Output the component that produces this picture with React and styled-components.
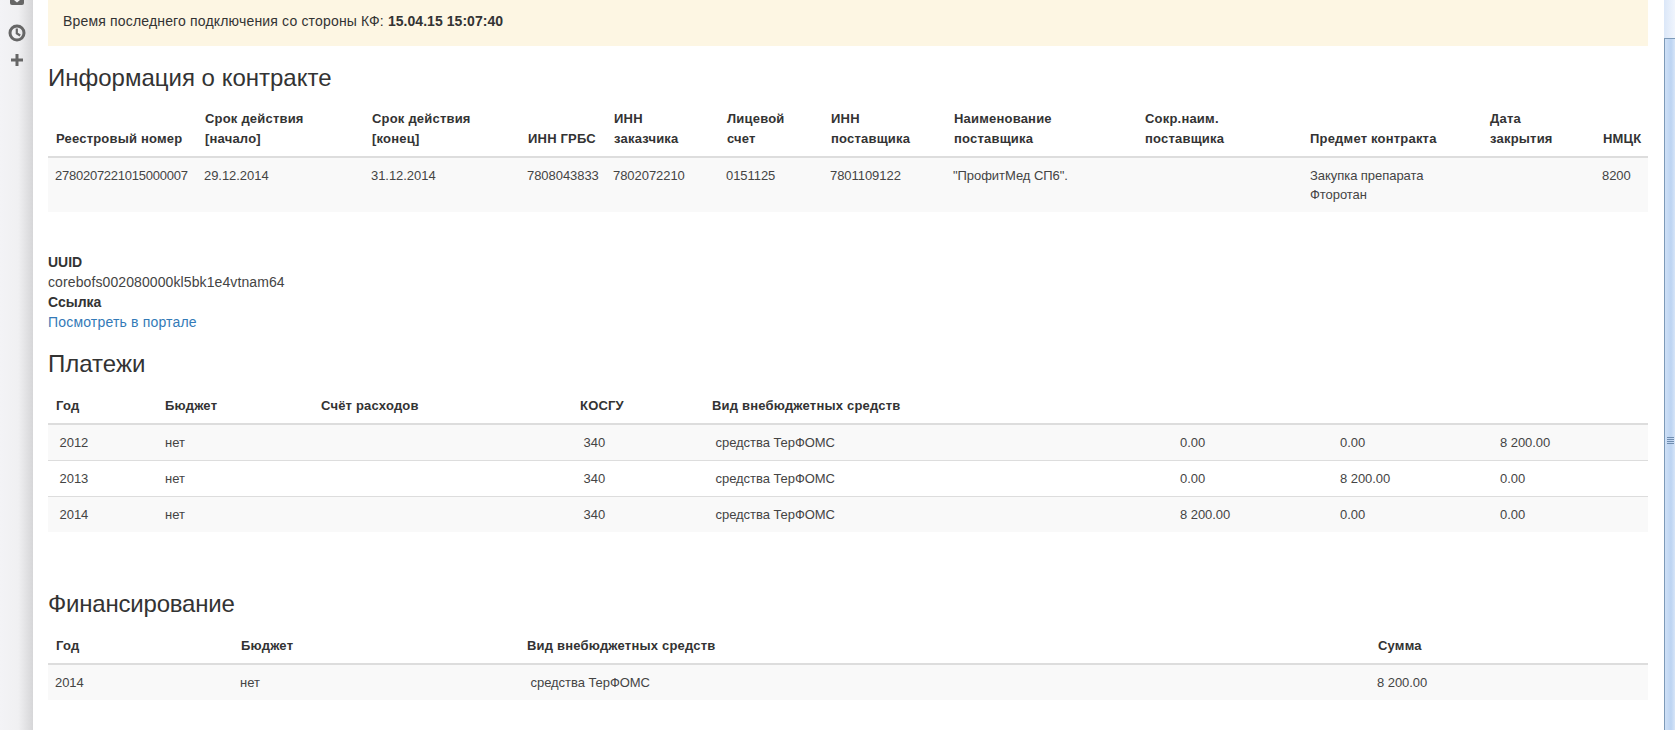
import styled, { createGlobalStyle } from 'styled-components';

const GlobalStyle = createGlobalStyle`
    html, body {
        margin: 0;
        padding: 0;
        height: 100%;
        overflow: hidden;
        background: #fff;
    }
    body {
        font-family: "Liberation Sans", Arial, sans-serif;
        font-size: 14px;
        line-height: 20px;
        color: #333;
    }
`

const Layout = styled.div`
    display: flex;
    width: 1675px;
    height: 730px;
    overflow: hidden;
`

const Sidebar = styled.div`
    width: 33px;
    flex: none;
    display: flex;
    flex-direction: column;
    align-items: center;
    background: linear-gradient(90deg, #f3f3f6 0%, #f0f0f2 55%, #d6d6d8 100%);
    color: #666;
`

const TopIcon = styled.svg`
    display: block;
`

const ClockIcon = styled.svg`
    display: block;
    margin-top: 19px;
`

const PlusIcon = styled.svg`
    display: block;
    margin-top: 12px;
`

const Content = styled.div`
    flex: 1;
    min-width: 0;
    padding: 0 16px 0 15px;
`

const Alert = styled.div`
    background: #fdf6e3;
    padding: 11px 15px 15px;
    letter-spacing: 0.17px;

    b {
        letter-spacing: 0.05px;
    }
`

const Heading = styled.h3`
    font-size: 24px;
    font-weight: normal;
    line-height: 26px;
    margin: ${(p) => p.$top}px 0 ${(p) => p.$bottom}px;
    letter-spacing: ${(p) => p.$spacing || 0}px;
    color: #333;
`

const Table = styled.table`
    width: 1600px;
    border-collapse: collapse;
    table-layout: fixed;
    font-size: 13px;
    line-height: 19px;
`

const HeadCell = styled.th`
    text-align: left;
    vertical-align: bottom;
    padding: 8px 8px 7px;
    font-weight: bold;
    line-height: 20px;
    letter-spacing: 0.2px;
    border-bottom: 2px solid #ddd;
    white-space: nowrap;
`

const Row = styled.tr`
    background: ${(p) => (p.$odd ? '#f9f9f9' : '#fff')};
    &:not(:first-child) {
        border-top: 1px solid #ddd;
    }
`

const Cell = styled.td`
    vertical-align: top;
    padding: 8px 8px 8px ${(p) => p.$left || 8}px;
    color: #444;
    letter-spacing: ${(p) => (p.$tight ? -0.25 : -0.05)}px;
`

const Details = styled.div`
    margin-top: 40px;
`

const Label = styled.div`
    font-weight: bold;
`

const Value = styled.div`
    letter-spacing: 0.1px;
    color: #444;
`

const PortalLink = styled.a`
    color: #337ab7;
    text-decoration: none;
    letter-spacing: 0.18px;
`

const Scrollbar = styled.div`
    width: 11px;
    flex: none;
    display: flex;
    flex-direction: column;
    background: linear-gradient(90deg, #dbe7f8, #f0f5fd);
`

const ScrollTop = styled.div`
    height: 38px;
    flex: none;
`

const ScrollThumb = styled.div`
    flex: 1;
    display: flex;
    flex-direction: column;
    align-items: center;
    padding-top: 398px;
    gap: 1px;
    border-left: 1px solid #7d9ab8;
    border-top: 1px solid #7d9ab8;
    background: linear-gradient(90deg, #cfe0f6, #bcd4f2 60%, #d6e5f8);
`

const Grip = styled.span`
    width: 7px;
    height: 1px;
    background: #6f8db0;
`

const contractCols = [149, 167, 156, 86, 113, 104, 123, 191, 165, 180, 113, 53];
const paymentCols = [109, 156, 259, 132, 468, 160, 160, 156];
const financeCols = [185, 286, 851, 278];

const Cols = ({ widths }) => (
    <colgroup>
        {widths.map((w, i) => <col key={i} style={{ width: w }} />)}
    </colgroup>
);

const contractHead = [
    ['Реестровый номер'],
    ['Срок действия', '[начало]'],
    ['Срок действия', '[конец]'],
    ['ИНН ГРБС'],
    ['ИНН', 'заказчика'],
    ['Лицевой', 'счет'],
    ['ИНН', 'поставщика'],
    ['Наименование', 'поставщика'],
    ['Сокр.наим.', 'поставщика'],
    ['Предмет контракта'],
    ['Дата', 'закрытия'],
    ['НМЦК'],
];

const contractRow = [
    '29.12.2014', '31.12.2014', '7808043833', '7802072210', '0151125',
    '7801109122', '"ПрофитМед СП6".', '',
];

const payments = [
    ['2012', '0.00', '0.00', '8 200.00'],
    ['2013', '0.00', '8 200.00', '0.00'],
    ['2014', '8 200.00', '0.00', '0.00'],
];

const App = () => {
    return (
        <Layout>
            <GlobalStyle />
            <Sidebar>
                <TopIcon width="14" height="5" viewBox="0 0 14 5">
                    <path d="M0 0h14v3a2 2 0 0 1-2 2H2a2 2 0 0 1-2-2z" fill="currentColor" />
                    <path d="M4 0l3 2.5L10 0z" fill="#f0f0f2" />
                </TopIcon>
                <ClockIcon width="18" height="18" viewBox="0 0 18 18">
                    <circle cx="9" cy="9" r="7" fill="none" stroke="currentColor" strokeWidth="3" />
                    <path d="M8.8 4.4v5l3.4 2.1" fill="none" stroke="currentColor" strokeWidth="2.2" />
                </ClockIcon>
                <PlusIcon width="12" height="12" viewBox="0 0 12 12">
                    <path d="M4.5 0h3v4.5H12v3H7.5V12h-3V7.5H0v-3h4.5z" fill="currentColor" />
                </PlusIcon>
            </Sidebar>
            <Content>
                <Alert>
                    Время последнего подключения со стороны КФ: <b>15.04.15 15:07:40</b>
                </Alert>

                <Heading $top={19} $bottom={10}>Информация о контракте</Heading>
                <Table>
                    <Cols widths={contractCols} />
                    <thead>
                        <tr>
                            {contractHead.map((lines, i) => (
                                <HeadCell key={i}>
                                    {lines.map((line, j) => <div key={j}>{line}</div>)}
                                </HeadCell>
                            ))}
                        </tr>
                    </thead>
                    <tbody>
                        <Row $odd>
                            <Cell $tight $left={7}>2780207221015000007</Cell>
                            {contractRow.map((text, i) => <Cell key={i} $left={7}>{text}</Cell>)}
                            <Cell>Закупка препарата<br />Фторотан</Cell>
                            <Cell />
                            <Cell $left={7}>8200</Cell>
                        </Row>
                    </tbody>
                </Table>

                <Details>
                    <Label>UUID</Label>
                    <Value>corebofs002080000kl5bk1e4vtnam64</Value>
                    <Label>Ссылка</Label>
                    <PortalLink href="#">Посмотреть в портале</PortalLink>
                </Details>

                <Heading $top={19} $bottom={11}>Платежи</Heading>
                <Table>
                    <Cols widths={paymentCols} />
                    <thead>
                        <tr>
                            <HeadCell>Год</HeadCell>
                            <HeadCell>Бюджет</HeadCell>
                            <HeadCell>Счёт расходов</HeadCell>
                            <HeadCell>КОСГУ</HeadCell>
                            <HeadCell>Вид внебюджетных средств</HeadCell>
                            <HeadCell />
                            <HeadCell />
                            <HeadCell />
                        </tr>
                    </thead>
                    <tbody>
                        {payments.map((row, i) => (
                            <Row key={row[0]} $odd={i % 2 === 0}>
                                <Cell>{'\u00a0'}{row[0]}</Cell>
                                <Cell>нет</Cell>
                                <Cell />
                                <Cell>{'\u00a0'}340</Cell>
                                <Cell>{'\u00a0'}средства ТерФОМС</Cell>
                                <Cell>{row[1]}</Cell>
                                <Cell>{row[2]}</Cell>
                                <Cell>{row[3]}</Cell>
                            </Row>
                        ))}
                    </tbody>
                </Table>

                <Heading $top={59} $bottom={11} $spacing={-0.2}>Финансирование</Heading>
                <Table>
                    <Cols widths={financeCols} />
                    <thead>
                        <tr>
                            <HeadCell>Год</HeadCell>
                            <HeadCell>Бюджет</HeadCell>
                            <HeadCell>Вид внебюджетных средств</HeadCell>
                            <HeadCell>Сумма</HeadCell>
                        </tr>
                    </thead>
                    <tbody>
                        <Row $odd>
                            <Cell $left={7}>2014</Cell>
                            <Cell $left={7}>нет</Cell>
                            <Cell>{'\u00a0'}средства ТерФОМС</Cell>
                            <Cell $left={7}>8 200.00</Cell>
                        </Row>
                    </tbody>
                </Table>
            </Content>
            <Scrollbar>
                <ScrollTop />
                <ScrollThumb>
                    <Grip />
                    <Grip />
                    <Grip />
                    <Grip />
                </ScrollThumb>
            </Scrollbar>
        </Layout>
    );
}

export default App;
